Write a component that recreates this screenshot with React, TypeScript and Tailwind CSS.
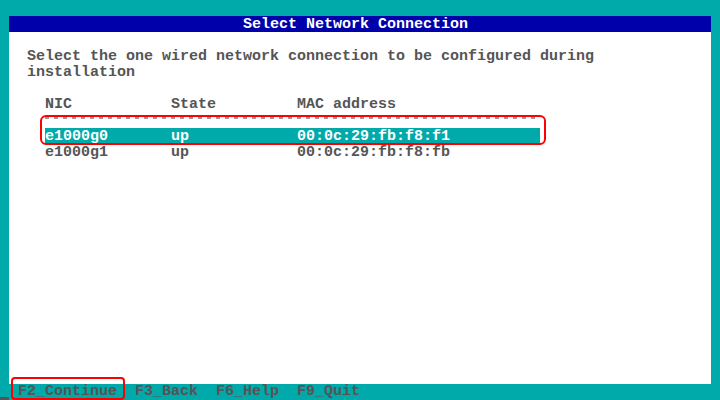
import React from 'react';

const mono = { fontFamily: '"Liberation Mono", "DejaVu Sans Mono", monospace' };

const rows = [
  { nic: 'e1000g0', state: 'up', mac: '00:0c:29:fb:f8:f1', selected: true },
  { nic: 'e1000g1', state: 'up', mac: '00:0c:29:fb:f8:fb', selected: false },
];

const pad = (s: string, n: number) => s + ' '.repeat(Math.max(0, n - s.length));

const App: React.FC = () => {
  return (
    <div
      className="relative w-[720px] h-[400px] bg-[#00aaaa] flex flex-col text-[15px] leading-[18px] font-bold whitespace-pre overflow-hidden"
      style={mono}
    >
      <div className="h-[16px]" />
      <div className="flex h-[368px]">
        <div className="w-[9px]" />
        <div className="w-[702px] bg-white flex flex-col text-[#555555]">
          <div className="h-[16px] bg-[#0000aa] text-white pl-[234px] overflow-hidden">Select Network Connection</div>
          <div className="h-[16px]" />
          <div className="h-[16px] pl-[18px]">Select the one wired network connection to be configured during</div>
          <div className="h-[16px] pl-[18px]">installation</div>
          <div className="h-[16px]" />
          <div className="h-[16px] pl-[36px]">{pad('NIC', 14) + pad('State', 14) + 'MAC address'}</div>
          <div className="h-[16px] pl-[36px] flex items-start pt-[5px]">
            <div className="w-[495px] h-[2px] bg-[repeating-linear-gradient(90deg,#9a9a9a_0px,#9a9a9a_4px,transparent_4px,transparent_9px)]" />
          </div>
          {rows.map((r) => (
            <div key={r.nic} className="h-[16px] pl-[36px]">
              <div className={`w-[495px] h-[16px] overflow-hidden ${r.selected ? 'bg-[#00aaaa] text-white' : ''}`}>
                {pad(r.nic, 14) + pad(r.state, 14) + r.mac}
              </div>
            </div>
          ))}
        </div>
        <div className="w-[9px]" />
      </div>
      <div className="h-[16px] pl-[18px] leading-[15px] text-[#555555]">F2_Continue  F3_Back  F6_Help  F9_Quit</div>

      {/* red annotation boxes */}
      <div className="absolute left-[40px] top-[115px] w-[506px] h-[30px] border-2 border-[#ff0000] rounded-[6px]" />
      <div className="absolute left-[11px] top-[377px] w-[114px] h-[23px] border-2 border-[#ff0000] rounded-[4px]" />
      <div className="absolute left-0 top-[397px] w-[9px] h-[3px] bg-[#555555]" />
    </div>
  );
};

export default App;
